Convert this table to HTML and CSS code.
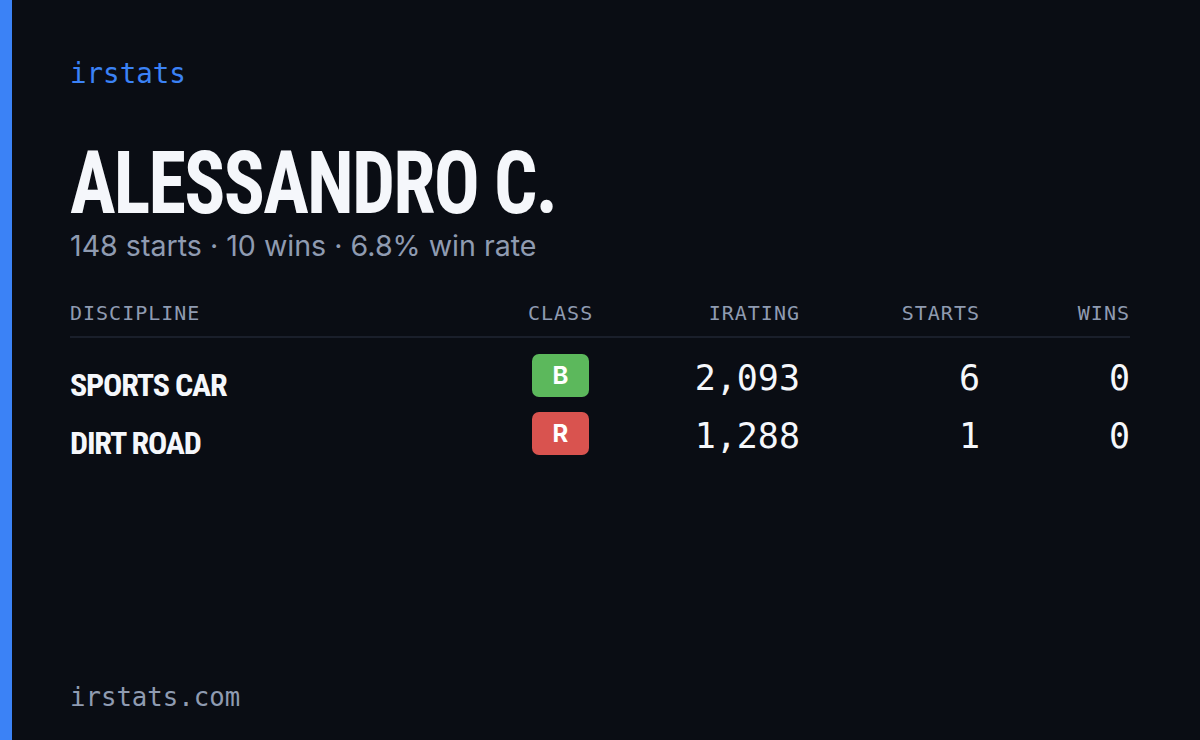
FILE: index.html
```html
<!DOCTYPE html>
<html>
<head>
<meta charset="utf-8">
<link rel="stylesheet" href="styles.css">
</head>
<body>
<div class="card">
  <div class="accent"></div>
  <main class="content">
    <div class="brand">irstats</div>
    <h1 class="name">ALESSANDRO C.</h1>
    <p class="summary">148 starts · 10 wins · 6.8% win rate</p>
    <div class="table">
      <div class="row head">
        <div class="c-disc">DISCIPLINE</div>
        <div class="c-class">CLASS</div>
        <div class="c-num">IRATING</div>
        <div class="c-num">STARTS</div>
        <div class="c-num">WINS</div>
      </div>
      <div class="row body">
        <div class="c-disc disc">SPORTS CAR</div>
        <div class="c-class"><span class="badge b">B</span></div>
        <div class="c-num num">2,093</div>
        <div class="c-num num">6</div>
        <div class="c-num num">0</div>
      </div>
      <div class="row body">
        <div class="c-disc disc">DIRT ROAD</div>
        <div class="c-class"><span class="badge r">R</span></div>
        <div class="c-num num">1,288</div>
        <div class="c-num num">1</div>
        <div class="c-num num">0</div>
      </div>
    </div>
    <div class="spacer"></div>
    <div class="footer">irstats.com</div>
  </main>
</div>
</body>
</html>
```
FILE: styles.css
```css
html, body {
  margin: 0;
  padding: 0;
  background: #0a0d14;
}
.card {
  width: 1200px;
  height: 740px;
  display: flex;
  background: #0a0d14;
}
.accent {
  width: 12px;
  background: #3b82f6;
  flex: none;
}
.content {
  flex: 1;
  padding: 55px 58px 0 58px;
  display: flex;
  flex-direction: column;
}
.brand {
  font-family: "DejaVu Sans Mono", monospace;
  font-size: 27.5px;
  color: #3b82f6;
  line-height: 36px;
}
.name {
  margin: 52px 0 0 0;
  font-family: "Liberation Sans Narrow", "Roboto Condensed", "DejaVu Sans Condensed", sans-serif;
  font-stretch: condensed;
  font-weight: 700;
  font-size: 88px;
  line-height: 80px;
  color: #f5f7fb;
  letter-spacing: -2px;
  transform: scaleX(0.867);
  transform-origin: left center;
  white-space: nowrap;
}
.summary {
  margin: 5px 0 0 0;
  font-family: "Inter", sans-serif;
  font-size: 28.6px;
  color: #8f9bb1;
  line-height: 36px;
}
.table {
  margin-top: 31px;
  width: 1060px;
}
.row {
  display: grid;
  grid-template-columns: 1fr 65px 207px 180px 150px;
  align-items: center;
}
.head {
  font-family: "DejaVu Sans Mono", monospace;
  font-size: 20px;
  letter-spacing: 1px;
  color: #8f9bb1;
  height: 36px;
  padding-bottom: 5px;
  border-bottom: 2px solid #1a1f2b;
}
.body {
  height: 58px;
}
.table .row.body:nth-child(2) { margin-top: 8px; }
.c-class { text-align: center; }
.c-num { text-align: right; }
.disc {
  font-family: "Liberation Sans Narrow", "Roboto Condensed", "DejaVu Sans Condensed", sans-serif;
  font-stretch: condensed;
  font-weight: 700;
  font-size: 32px;
  color: #f5f7fb;
  letter-spacing: -1.2px;
  padding-top: 20px;
}
.num {
  font-family: "DejaVu Sans Mono", monospace;
  font-size: 35px;
  color: #f5f7fb;
  padding-top: 6px;
}
.badge {
  display: inline-flex;
  align-items: center;
  justify-content: center;
  width: 57px;
  height: 43px;
  border-radius: 7px;
  font-family: "Inter", sans-serif;
  font-weight: 700;
  font-size: 24px;
  color: #ffffff;
}
.badge.b { background: #5cb85c; }
.badge.r { background: #d9534f; }
.spacer { flex: 1; }
.footer {
  font-family: "DejaVu Sans Mono", monospace;
  font-size: 25.7px;
  color: #8f9bb1;
  line-height: 30px;
  margin-bottom: 28px;
}
```
